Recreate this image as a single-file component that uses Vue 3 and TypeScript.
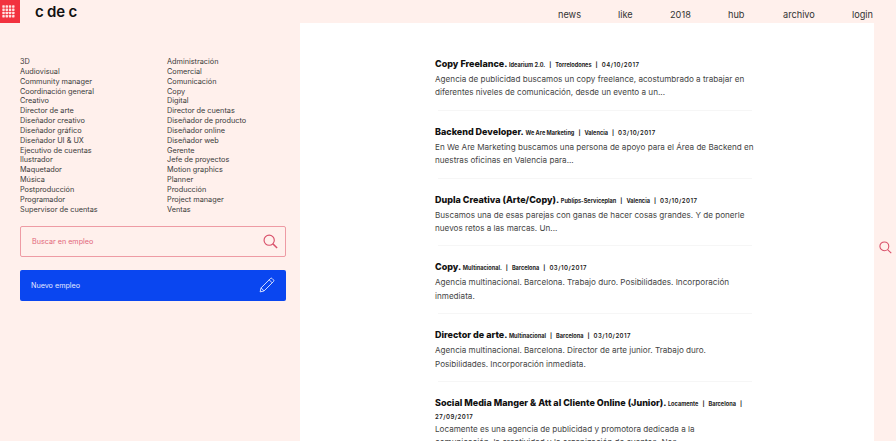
<script setup lang="ts">
const navItems: string[] = ['news', 'like', '2018', 'hub', 'archivo', 'login']
const colA: string[] = ['3D', 'Audiovisual', 'Community manager', 'Coordinación general', 'Creativo', 'Director de arte', 'Diseñador creativo', 'Diseñador gráfico', 'Diseñador UI & UX', 'Ejecutivo de cuentas', 'Ilustrador', 'Maquetador', 'Música', 'Postproducción', 'Programador', 'Supervisor de cuentas']
const colB: string[] = ['Administración', 'Comercial', 'Comunicación', 'Copy', 'Digital', 'Director de cuentas', 'Diseñador de producto', 'Diseñador online', 'Diseñador web', 'Gerente', 'Jefe de proyectos', 'Motion graphics', 'Planner', 'Producción', 'Project manager', 'Ventas']
interface Job { title: string; company: string; city: string; date: string; text: string }
const jobs: Job[] = [
  { title: 'Copy Freelance.', company: 'Idearium 2.0.', city: 'Torrelodones', date: '04/10/2017', text: 'Agencia de publicidad buscamos un copy freelance, acostumbrado a trabajar en\ndiferentes niveles de comunicación, desde un evento a un...' },
  { title: 'Backend Developer.', company: 'We Are Marketing', city: 'Valencia', date: '03/10/2017', text: 'En We Are Marketing buscamos una persona de apoyo para el Área de Backend en\nnuestras oficinas en Valencia para...' },
  { title: 'Dupla Creativa (Arte/Copy).', company: 'Publips-Serviceplan', city: 'Valencia', date: '03/10/2017', text: 'Buscamos una de esas parejas con ganas de hacer cosas grandes. Y de ponerle\nnuevos retos a las marcas. Un...' },
  { title: 'Copy.', company: 'Multinacional.', city: 'Barcelona', date: '03/10/2017', text: 'Agencia multinacional. Barcelona. Trabajo duro. Posibilidades. Incorporación\ninmediata.' },
  { title: 'Director de arte.', company: 'Multinacional', city: 'Barcelona', date: '03/10/2017', text: 'Agencia multinacional. Barcelona. Director de arte junior. Trabajo duro.\nPosibilidades. Incorporación inmediata.' },
  { title: 'Social Media Manger & Att al Cliente Online (Junior).', company: 'Locamente', city: 'Barcelona', date: '27/09/2017', text: 'Locamente es una agencia de publicidad y promotora dedicada a la\ncomunicación, la creatividad y la organización de eventos. Nos...' },
]
</script>

<template>
  <div class="page">
    <header class="top">
      <div class="brand">
        <div class="tile">
          <svg width="13" height="13" viewBox="0 0 16 16" fill="#ffe3e1">
            <template v-for="r in 4" :key="r">
              <rect v-for="c in 4" :key="c" :x="(c - 1) * 4 + 0.4" :y="(r - 1) * 4 + 0.4" width="3" height="3" rx="0.6" />
            </template>
          </svg>
        </div>
        <span class="logo">c de c</span>
      </div>
      <nav class="nav">
        <a v-for="n in navItems" :key="n">{{ n }}</a>
      </nav>
    </header>
    <div class="body">
      <aside class="side">
        <div class="cats">
          <ul><li v-for="c in colA" :key="c">{{ c }}</li></ul>
          <ul><li v-for="c in colB" :key="c">{{ c }}</li></ul>
        </div>
        <div class="search">
          <span>Buscar en empleo</span>
          <svg width="15" height="15" viewBox="0 0 17 17" fill="none" stroke="#d9506a" stroke-width="1.3">
            <circle cx="7" cy="7" r="5.8" />
            <path d="M11.2 11.2 16 15.8" stroke-width="1.6" />
          </svg>
        </div>
        <div class="new">
          <span>Nuevo empleo</span>
          <svg width="16" height="16" viewBox="0 0 17 17" fill="none" stroke="#dfe6ff" stroke-width="1">
            <path d="M1.2 15.8 2.2 11.6 12.2 1.6a1.2 1.2 0 0 1 1.7 0l1.5 1.5a1.2 1.2 0 0 1 0 1.7L5.4 14.8Z" />
            <path d="M10.8 3 14 6.2M2.2 11.6 5.4 14.8" />
          </svg>
        </div>
      </aside>
      <main class="main">
        <article v-for="j in jobs" :key="j.title" class="job">
          <h3>{{ j.title }} <small>{{ j.company }}<i>|</i>{{ j.city }}<i>|</i></small><small class="date">{{ j.date }}</small></h3>
          <p>{{ j.text }}</p>
        </article>
      </main>
      <div class="rail">
        <svg width="13" height="13" viewBox="0 0 17 17" fill="none" stroke="#d9506a" stroke-width="1.4">
          <circle cx="7" cy="7" r="5.8" />
          <path d="M11.2 11.2 16 15.8" />
        </svg>
      </div>
    </div>
  </div>
</template>

<style>
html, body { margin: 0; overflow: hidden; background: #fff0ec; }
</style>

<style scoped>
.page {
  width: 896px;
  height: 441px;
  overflow: hidden;
  background: #fff0ec;
  font-family: Inter, "Liberation Sans", sans-serif;
  color: #333;
  display: flex;
  flex-direction: column;
}
.top {
  height: 23px;
  flex: none;
  display: flex;
  justify-content: space-between;
}
.brand { display: flex; align-items: flex-start; }
.tile {
  width: 20px;
  height: 23px;
  box-sizing: border-box;
  padding-left: 2px;
  background: #f2323f;
  display: flex;
  align-items: center;
}
.logo {
  margin-left: 15px;
  font: 600 15px/24px Inter, sans-serif;
  color: #111;
  letter-spacing: -0.2px;
}
.nav {
  display: flex;
  align-items: center;
  font-size: 9.2px;
  color: #333;
  padding: 5px 22px 0 0;
}
.nav a { display: block; }
.nav a:nth-child(1) { width: 60px; }
.nav a:nth-child(2) { width: 52px; }
.nav a:nth-child(3) { width: 58px; }
.nav a:nth-child(4) { width: 55px; }
.nav a:nth-child(5) { width: 69px; }
.nav a:nth-child(6) { width: 22px; }
.body { flex: 1; display: flex; min-height: 0; }
.side { width: 300px; flex: none; padding: 34px 14px 0 20px; box-sizing: border-box; }
.cats { display: flex; }
.cats ul { list-style: none; margin: 0; padding: 0; flex: 0 0 147px; font-size: 7.3px; line-height: 9.85px; color: #3a3a3a; white-space: nowrap; }
.search {
  margin-top: 11px;
  height: 31px;
  box-sizing: border-box;
  border: 1px solid #ee9ba4;
  border-radius: 2px;
  display: flex;
  align-items: center;
  justify-content: space-between;
  padding: 0 7px 0 11px;
  font-size: 7.2px;
  color: #e2677b;
}
.new {
  margin-top: 13px;
  height: 31px;
  box-sizing: border-box;
  background: #0a46f0;
  border-radius: 2px;
  display: flex;
  align-items: center;
  justify-content: space-between;
  padding: 0 11px;
  font-size: 7.2px;
  color: #e3e9ff;
}
.main { width: 574px; flex: none; background: #fff; padding: 35px 122px 0 135px; box-sizing: border-box; overflow: hidden; }
.job { height: 67.8px; position: relative; }
.job + .job::before { content: ""; position: absolute; left: 3px; right: 0; top: -16px; height: 1px; background: #f6f6f6; }
.job h3 { margin: 0; font-size: 9px; line-height: 11px; font-weight: 800; color: #111; }
.job small { font-size: 5.6px; font-weight: 700; color: #222; }
.job small i { font-style: normal; margin: 0 4px; }
.job .date { display: inline-block; font-size: 6px; line-height: 1; font-weight: 600; letter-spacing: 0.5px; }
.job p { margin: 2px 0 0; font-size: 8.15px; line-height: 13.4px; color: #444; white-space: pre; }
.rail { flex: 1; display: flex; justify-content: center; padding-top: 218px; padding-left: 1px; box-sizing: border-box; }
</style>
